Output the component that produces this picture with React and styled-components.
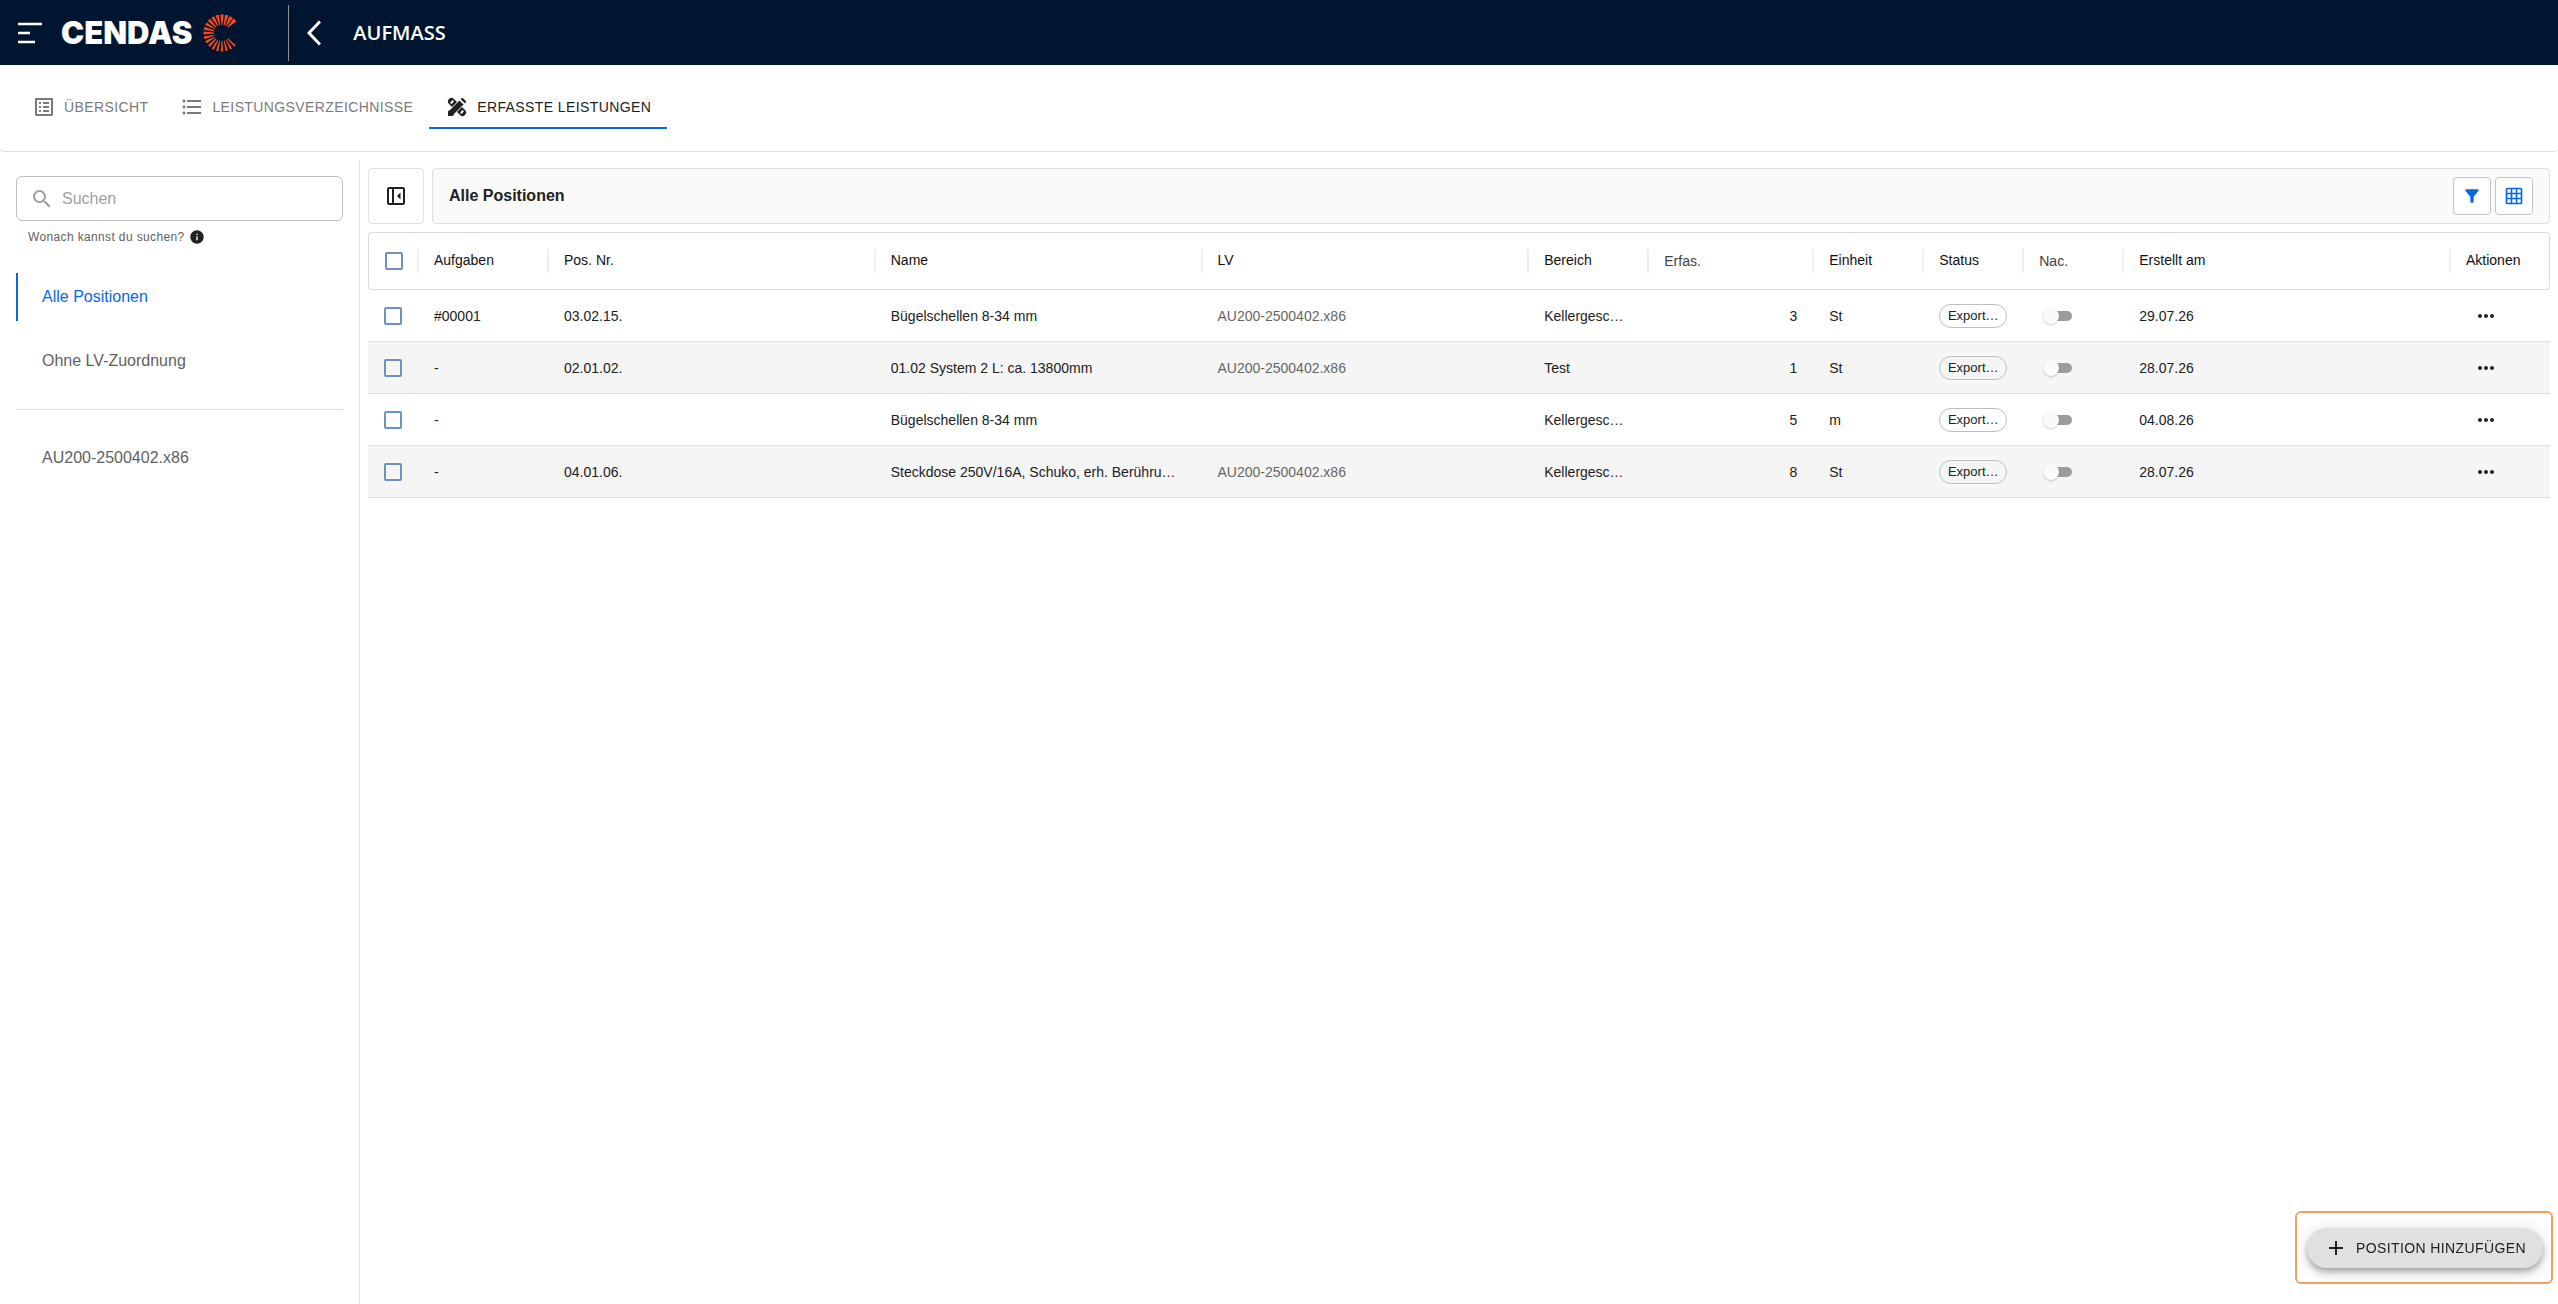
import { useState } from "react";
import styled, { createGlobalStyle } from "styled-components";
import {
  MdAdd,
  MdFilterAlt,
  MdFormatListBulleted,
  MdGridOn,
  MdInfo,
  MdMoreHoriz,
  MdOutlineListAlt,
  MdSearch,
} from "react-icons/md";

const columns = [
  { key: "task", label: "Aufgaben", width: 130 },
  { key: "pos", label: "Pos. Nr." },
  { key: "name", label: "Name" },
  { key: "lv", label: "LV" },
  { key: "area", label: "Bereich", width: 120 },
  { key: "amount", label: "Erfas.", width: 165, soft: true },
  { key: "unit", label: "Einheit", width: 110 },
  { key: "status", label: "Status", width: 100 },
  { key: "extra", label: "Nac.", width: 100, soft: true },
  { key: "created", label: "Erstellt am" },
  { key: "actions", label: "Aktionen", width: 100 },
];

const positions = [
  { id: 1, task: "#00001", pos: "03.02.15.", name: "Bügelschellen 8-34 mm", lv: "AU200-2500402.x86", area: "Kellergesc…", amount: 3, unit: "St", created: "29.07.26" },
  { id: 2, task: "-", pos: "02.01.02.", name: "01.02 System 2 L: ca. 13800mm", lv: "AU200-2500402.x86", area: "Test", amount: 1, unit: "St", created: "28.07.26" },
  { id: 3, task: "-", pos: "", name: "Bügelschellen 8-34 mm", lv: "", area: "Kellergesc…", amount: 5, unit: "m", created: "04.08.26" },
  { id: 4, task: "-", pos: "04.01.06.", name: "Steckdose 250V/16A, Schuko, erh. Berühru…", lv: "AU200-2500402.x86", area: "Kellergesc…", amount: 8, unit: "St", created: "28.07.26" },
];

function LogoMark() {
  const rays = Array.from({ length: 19 }, (_, i) => i);
  return (
    <svg width="38" height="38" viewBox="-19 -19 38 38" aria-hidden="true">
      {rays.map((i) => {
        const w = 1.9 - i * 0.05;
        return (
          <polygon
            key={i}
            fill="#ff4a1c"
            points={`-0.4,-8 0.4,-8 ${w},-18.5 ${-w},-18.5`}
            transform={`rotate(${45 - i * 15})`}
          />
        );
      })}
    </svg>
  );
}

function MeasureIcon() {
  return (
    <svg width="24" height="24" viewBox="0 0 24 24" aria-hidden="true">
      <path d="M6.500 6.500l11 11" stroke="#212121" strokeWidth="7" strokeLinecap="round" />
      <path d="M6.300 7.700l1.400-1.400M16.300 17.700l1.400-1.400" stroke="#fff" strokeWidth="2" strokeLinecap="round" />
      <path d="M3 21v-4.500L14.500 5l4.500 4.500L7.500 21z" fill="#212121" stroke="#fff" strokeWidth="1" />
      <path d="M3 21v-4.500l1.500-1.500 4.500 4.500L7.500 21z" fill="#212121" />
      <path d="M15.500 4l1-.8a1.200 1.200 0 0 1 1.500 0l2.800 2.800a1.200 1.200 0 0 1 0 1.500l-.8 1z" fill="#212121" />
    </svg>
  );
}

function Topbar() {
  return (
    <TopbarContainer>
      <BarButton aria-label="Menü">
        <svg width="24" height="22" viewBox="0 0 24 22" stroke="#fff" strokeWidth="2.4">
          <path d="M0 2h24M0 11h12M0 20h17" />
        </svg>
      </BarButton>
      <Brand href="#">
        CENDAS
        <LogoMark />
      </Brand>
      <Separator />
      <BarButton aria-label="Zurück">
        <svg width="14" height="26" viewBox="0 0 14 26" fill="none" stroke="#fff" strokeWidth="3">
          <path d="M13 1.500L2 13l11 11.500" />
        </svg>
      </BarButton>
      <PageTitle>AUFMASS</PageTitle>
    </TopbarContainer>
  );
}

function Sidebar() {
  return (
    <SidebarContainer>
      <SearchBox>
        <MdSearch size={24} />
        <input type="search" placeholder="Suchen" aria-label="Suchen" />
      </SearchBox>
      <Hint>
        Wonach kannst du suchen? <MdInfo size={16} />
      </Hint>
      <SideLink href="#" $active>Alle Positionen</SideLink>
      <SideLink href="#">Ohne LV-Zuordnung</SideLink>
      <Divider />
      <SideLink href="#">AU200-2500402.x86</SideLink>
    </SidebarContainer>
  );
}

function PositionsTable() {
  const [selected, setSelected] = useState([]);

  function toggle(id) {
    setSelected(selected.includes(id) ? selected.filter((s) => s !== id) : [...selected, id]);
  }

  function toggleAll() {
    setSelected(selected.length === positions.length ? [] : positions.map((p) => p.id));
  }

  return (
    <Table>
      <colgroup>
        <Col $width={50} />
        {columns.map((c) => <Col key={c.key} $width={c.width} />)}
      </colgroup>
      <thead>
        <tr>
          <HeadCell>
            <Checkbox
              type="checkbox"
              aria-label="Alle auswählen"
              checked={selected.length === positions.length}
              onChange={toggleAll}
            />
          </HeadCell>
          {columns.map((c) => (
            <HeadCell key={c.key}>
              <HeadLabel $soft={c.soft}>{c.label}</HeadLabel>
            </HeadCell>
          ))}
        </tr>
      </thead>
      <tbody>
        {positions.map((p) => (
          <Row key={p.id}>
            <Cell>
              <Checkbox
                type="checkbox"
                aria-label={`Position ${p.id} auswählen`}
                checked={selected.includes(p.id)}
                onChange={() => toggle(p.id)}
              />
            </Cell>
            <Cell>{p.task}</Cell>
            <Cell>{p.pos}</Cell>
            <Cell>{p.name}</Cell>
            <Cell $muted>{p.lv}</Cell>
            <Cell>{p.area}</Cell>
            <Cell $right>{p.amount}</Cell>
            <Cell>{p.unit}</Cell>
            <Cell><Chip>Export…</Chip></Cell>
            <Cell><Switch type="checkbox" role="switch" aria-label="Nachtrag" /></Cell>
            <Cell>{p.created}</Cell>
            <Cell>
              <MoreButton aria-label="Aktionen"><MdMoreHoriz size={24} /></MoreButton>
            </Cell>
          </Row>
        ))}
      </tbody>
    </Table>
  );
}

export default function App() {
  return (
    <Page>
      <GlobalStyle />
      <Topbar />
      <Tabs>
        <Tab href="#"><MdOutlineListAlt size={24} />ÜBERSICHT</Tab>
        <Tab href="#"><MdFormatListBulleted size={24} />LEISTUNGSVERZEICHNISSE</Tab>
        <Tab href="#" $active><MeasureIcon />ERFASSTE LEISTUNGEN</Tab>
      </Tabs>
      <Content>
        <Sidebar />
        <Main>
          <Toolbar>
            <CollapseButton aria-label="Seitenleiste einklappen">
              <svg width="18" height="18" viewBox="0 0 18 18" fill="none" stroke="#212121" strokeWidth="2">
                <rect x="1" y="1" width="16" height="16" rx="1" />
                <path d="M6 1v16" />
                <path d="M13.500 5.500v7L10 9z" fill="#212121" stroke="none" />
              </svg>
            </CollapseButton>
            <TitleBar>
              <h2>Alle Positionen</h2>
              <ToolButton aria-label="Filter"><MdFilterAlt size={20} /></ToolButton>
              <ToolButton aria-label="Spalten"><MdGridOn size={20} /></ToolButton>
            </TitleBar>
          </Toolbar>
          <PositionsTable />
        </Main>
      </Content>
      <Highlight>
        <AddButton><MdAdd size={24} />POSITION HINZUFÜGEN</AddButton>
      </Highlight>
    </Page>
  );
}

const GlobalStyle = createGlobalStyle`
  * {
    box-sizing: border-box;
  }
  body {
    margin: 0;
    background: #fff;
    color: #212121;
    font-family: "Liberation Sans", Arial, sans-serif;
    font-size: 14px;
  }
  button, input {
    font: inherit;
    color: inherit;
  }
  button {
    padding: 0;
    cursor: pointer;
  }
  a {
    text-decoration: none;
  }
  svg {
    flex: none;
    display: block;
  }
`;

const Page = styled.div`
  display: flex;
  flex-direction: column;
  min-height: 100vh;
`;

const TopbarContainer = styled.header`
  display: flex;
  align-items: center;
  height: 65px;
  padding-left: 18px;
  background: #00152f;
  color: #fff;
`;

const BarButton = styled.button`
  border: none;
  background: none;
`;

const Brand = styled.a`
  display: flex;
  align-items: center;
  gap: 11px;
  margin: 0 47px 0 19px;
  color: #fff;
  font-family: Inter, sans-serif;
  font-size: 31px;
  font-weight: 900;
  line-height: 38px;
`;

const Separator = styled.div`
  width: 1px;
  height: 56px;
  margin-right: 18px;
  background: #8a8f99;
`;

const PageTitle = styled.h1`
  margin: 0 0 0 32px;
  font-family: "Open Sans", sans-serif;
  font-size: 20px;
  font-weight: 600;
`;

const Tabs = styled.nav`
  display: flex;
  align-items: center;
  height: 87px;
  padding: 0 16px;
  border-bottom: 1px solid #e0e0e0;
  border-radius: 4px;
`;

const Tab = styled.a`
  display: flex;
  align-items: center;
  gap: 8px;
  height: 42px;
  padding: 0 16px;
  border-bottom: 2px solid ${(p) => (p.$active ? "#0768e4" : "transparent")};
  color: ${(p) => (p.$active ? "#212121" : "#7a7a7a")};
  letter-spacing: 0.028em;
`;

const Content = styled.div`
  display: flex;
  flex: 1;
  padding-top: 8px;
`;

const SidebarContainer = styled.aside`
  width: 360px;
  padding: 16px;
  border-right: 1px solid #e0e0e0;
`;

const SearchBox = styled.div`
  display: flex;
  align-items: center;
  gap: 8px;
  height: 45px;
  padding: 0 13px;
  border: 1px solid #bdbdbd;
  border-radius: 6px;
  color: #9e9e9e;
  font-size: 16px;
  input {
    flex: 1;
    min-width: 0;
    padding: 0;
    border: none;
    outline: none;
    background: none;
    color: #212121;
  }
  input::placeholder {
    color: #a0a0a0;
  }
`;

const Hint = styled.div`
  display: flex;
  align-items: center;
  gap: 4px;
  height: 16px;
  margin: 8px 0 28px 12px;
  color: #616161;
  font-size: 12px;
  letter-spacing: 0.03em;
  svg {
    color: #212121;
  }
`;

const SideLink = styled.a`
  display: flex;
  align-items: center;
  height: 48px;
  margin-bottom: 16px;
  padding-left: 24px;
  border-left: 2px solid ${(p) => (p.$active ? "#0768e4" : "transparent")};
  color: ${(p) => (p.$active ? "#0768e4" : "#616161")};
  font-size: 16px;
`;

const Divider = styled.hr`
  height: 1px;
  margin: 24px 0;
  border: none;
  background: #e0e0e0;
`;

const Main = styled.main`
  flex: 1;
  min-width: 0;
  padding: 8px;
`;

const Toolbar = styled.div`
  display: flex;
  gap: 8px;
  height: 56px;
  margin-bottom: 8px;
`;

const CollapseButton = styled.button`
  display: flex;
  align-items: center;
  justify-content: center;
  width: 56px;
  border: 1px solid #e0e0e0;
  border-radius: 4px;
  background: #fff;
`;

const TitleBar = styled.div`
  display: flex;
  flex: 1;
  align-items: center;
  gap: 4px;
  padding: 0 16px;
  border: 1px solid #e0e0e0;
  border-radius: 4px;
  background: #fafafa;
  h2 {
    margin: 0 auto 0 0;
    font-size: 16px;
  }
`;

const ToolButton = styled.button`
  display: flex;
  align-items: center;
  justify-content: center;
  width: 38px;
  height: 38px;
  border: 1px solid #c4c4c4;
  border-radius: 4px;
  background: #fff;
  color: #0768e4;
`;

const Table = styled.table`
  width: 100%;
  table-layout: fixed;
  border-spacing: 0;
`;

const Col = styled.col`
  width: ${(p) => (p.$width ? `${p.$width}px` : "auto")};
`;

const HeadCell = styled.th`
  height: 58px;
  padding: 0;
  border: solid #dcdcdc;
  border-width: 1px 0;
  font-weight: 400;
  text-align: left;
  &:first-child {
    padding-left: 16px;
    border-left-width: 1px;
    border-radius: 4px 0 0 4px;
  }
  &:last-child {
    border-right-width: 1px;
    border-radius: 0 4px 4px 0;
  }
`;

const HeadLabel = styled.div`
  height: 24px;
  margin-left: -1px;
  padding-left: 15px;
  border-left: 2px solid #eee;
  color: ${(p) => (p.$soft ? "#424242" : "#111")};
  line-height: ${(p) => (p.$soft ? "24px" : "22px")};
`;

const Row = styled.tr`
  &:nth-child(even) {
    background: #f5f5f5;
  }
`;

const Cell = styled.td`
  height: 52px;
  padding: 0 16px;
  border-bottom: 1px solid #e0e0e0;
  color: ${(p) => (p.$muted ? "#666" : "#212121")};
  text-align: ${(p) => (p.$right ? "right" : "left")};
  white-space: nowrap;
`;

const Checkbox = styled.input`
  appearance: none;
  display: block;
  width: 18px;
  height: 18px;
  margin: 0;
  border: 2px solid #7090c0;
  border-radius: 2px;
  &:checked {
    background: #7090c0;
  }
`;

const Chip = styled.span`
  display: flex;
  align-items: center;
  justify-content: center;
  width: 68px;
  height: 24px;
  border: 1px solid #bdbdbd;
  border-radius: 12px;
  font-size: 13px;
`;

const Switch = styled.input`
  appearance: none;
  position: relative;
  display: block;
  width: 40px;
  height: 24px;
  margin: 0;
  &::before {
    content: "";
    position: absolute;
    inset: 7px;
    border-radius: 5px;
    background: #9c9c9c;
  }
  &::after {
    content: "";
    position: absolute;
    top: 4px;
    left: 4px;
    width: 16px;
    height: 16px;
    border-radius: 50%;
    background: #fafafa;
    box-shadow: 0 1px 2px rgba(0, 0, 0, 0.2);
  }
  &:checked::after {
    left: 20px;
  }
`;

const MoreButton = styled.button`
  display: flex;
  align-items: center;
  justify-content: center;
  width: 40px;
  height: 40px;
  border: none;
  background: none;
`;

const Highlight = styled.div`
  position: fixed;
  right: 5px;
  bottom: 20px;
  padding: 15px 8px 14px 10px;
  border: 2px solid #f5a05f;
  border-radius: 6px;
`;

const AddButton = styled.button`
  display: flex;
  align-items: center;
  gap: 8px;
  height: 40px;
  padding: 0 17px;
  border: none;
  border-radius: 20px;
  background: #e0e0e0;
  box-shadow: 0 3px 5px rgba(0, 0, 0, 0.2), 0 6px 10px rgba(0, 0, 0, 0.14), 0 1px 18px rgba(0, 0, 0, 0.12);
  letter-spacing: 0.028em;
`;
